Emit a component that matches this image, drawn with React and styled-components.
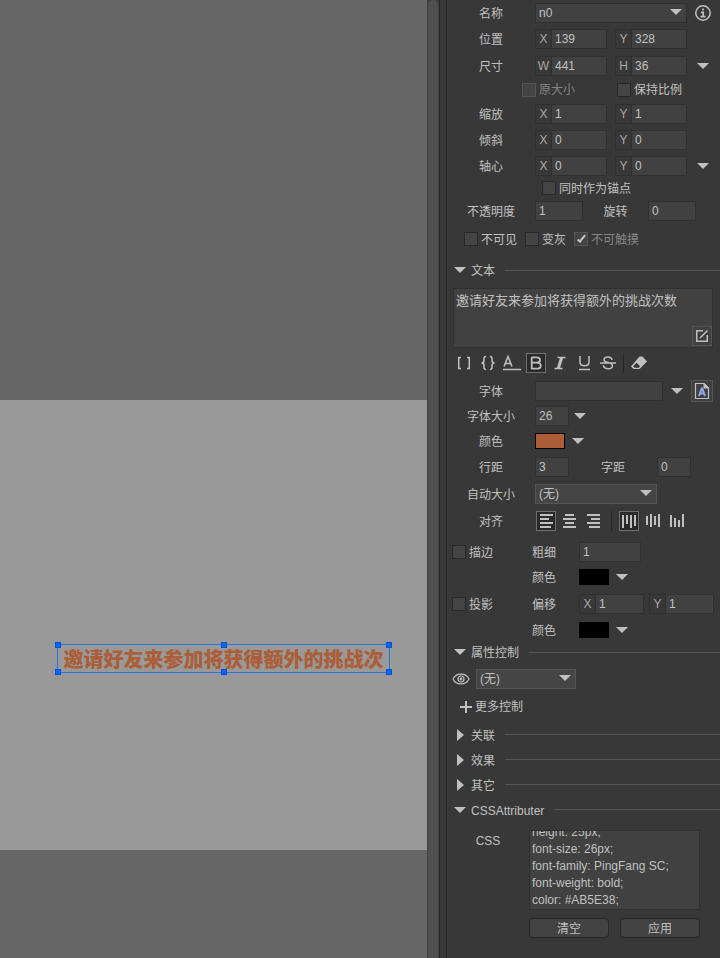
import React, { useLayoutEffect, useRef } from "react";
import styled, { createGlobalStyle, css } from "styled-components";

const Global = createGlobalStyle`
  *, *::before, *::after { box-sizing: border-box; }
  body { margin: 0; background: #383838; }
  body, button, input, select, textarea {
    font: 12px/16px "Liberation Sans", "Noto Sans CJK SC", sans-serif;
    color: #c0c0c0;
  }
  svg { display: block; flex: none; }
`;

/* ---------- shell ---------- */
const Shell = styled.div`
  display: grid;
  grid-template-columns: minmax(0, 1fr) 12px 8px 273px;
  min-height: 100vh;
`;
const Viewport = styled.main`
  display: grid;
  grid-template-rows: 400px 450px 1fr;
  background: #666;
  overflow: hidden;
`;
const Artboard = styled.section`
  grid-row: 2;
  position: relative;
  background: #999;
`;
const Selection = styled.div`
  position: absolute;
  left: 57px;
  top: 244px;
  width: 333px;
  height: 29px;
  border: 1px solid #2b71e0;
  color: #ab5e38;
  font: 900 20px/27px "Noto Sans CJK SC", sans-serif;
  text-align: center;
  white-space: nowrap;
`;
const Handle = styled.i`
  position: absolute;
  width: 6px;
  height: 6px;
  margin: -3px;
  left: ${(p) => p.$x};
  top: ${(p) => p.$y};
  background: #0a66ff;
  border: 1px solid #0050d0;
`;
const Scrollbar = styled.div`
  background: #404040;
  padding: 0 1px;
  display: grid;
`;
const Thumb = styled.div`
  background: #505050;
  border-radius: 6px 6px 0 0;
`;
const Splitter = styled.div`
  background: #383838;
  border: solid #262626;
  border-width: 0 1px;
`;
const Panel = styled.aside`
  background: #383838;
  overflow: hidden;
`;

/* ---------- rows ---------- */
const Row = styled.div`
  display: grid;
  grid-template-columns: 88px minmax(0, 1fr);
  align-items: center;
  height: ${(p) => p.$h}px;
`;
const Label = styled.label`
  text-align: center;
  white-space: nowrap;
  padding-top: 2px;
`;
const Line = styled.div`
  display: flex;
  align-items: center;
  height: ${(p) => p.$h || 20}px;
  gap: ${(p) => p.$gap || 0}px;
  padding-left: ${(p) => p.$left || 0}px;
`;
const PairGrid = styled.div`
  display: grid;
  grid-template-columns: minmax(0, 1fr) minmax(0, 1fr) 25px;
  column-gap: 8px;
  align-items: center;
`;
const SplitGrid = styled.div`
  display: grid;
  grid-template-columns: ${(p) => p.$w}px ${(p) => p.$mid}px ${(p) => p.$w}px;
  align-items: center;
`;
const EffectGrid = styled.div`
  display: grid;
  grid-template-columns: 80px 47px minmax(0, 1fr);
  grid-template-rows: 100%;
  align-items: center;
  padding-left: 5px;
  height: ${(p) => p.$h}px;
`;
const EffectLabel = styled.label`
  grid-column: 2;
  padding-top: 2px;
`;
const OffsetGrid = styled.div`
  display: grid;
  grid-template-columns: 1fr 1fr;
  gap: 5px;
  padding-right: 6px;
`;

/* ---------- controls ---------- */
const fieldBox = css`
  height: 20px;
  background: #414141;
  border: 1px solid #303030;
  outline: none;
`;
const Input = styled.input`
  ${fieldBox}
  width: ${(p) => (p.$w ? p.$w + "px" : "100%")};
  min-width: 0;
  padding: 0 3px;
`;
const AxisBox = styled.label`
  ${fieldBox}
  display: grid;
  grid-template-columns: 15px minmax(0, 1fr);
  background: #383838;
  line-height: 18px;
  text-align: center;
  color: #a8a8a8;
`;
const AxisInput = styled.input`
  min-width: 0;
  width: 100%;
  height: 18px;
  border: 0;
  border-left: 1px solid #303030;
  background: #414141;
  padding: 0 3px;
  outline: none;
`;
const Picker = styled.div`
  display: grid;
  width: ${(p) => (p.$w ? p.$w + "px" : "100%")};
  align-items: center;
  & > * { grid-area: 1 / 1; }
  & > svg { justify-self: end; margin: 0 5px 2px 0; pointer-events: none; }
`;
const Select = styled.select`
  ${fieldBox}
  appearance: none;
  width: 100%;
  padding: 0 3px;
  background: #454545;
  border-color: #555;
`;
const CheckLabel = styled.label`
  display: inline-flex;
  align-items: center;
  gap: 3px;
  width: ${(p) => (p.$w ? p.$w + "px" : "auto")};
  white-space: nowrap;
  color: ${(p) => (p.$dim ? "#858585" : "#c0c0c0")};
`;
const CheckText = styled.span`
  padding-top: 1px;
`;
const CheckBox = styled.input`
  appearance: none;
  width: 14px;
  height: 14px;
  margin: 0;
  display: grid;
  place-items: center;
  background: #444;
  border: 1px solid #282828;
  &:disabled { border-color: #555; }
  &:checked::before {
    content: "";
    width: 9px;
    height: 4px;
    border: solid #c8c8c8;
    border-width: 0 0 2px 2px;
    rotate: -50deg;
    translate: 0 -1px;
  }
`;
const IconButton = styled.button`
  display: grid;
  place-items: center;
  width: ${(p) => p.$size || 20}px;
  height: ${(p) => p.$size || 20}px;
  padding: 0;
  background: ${(p) => (p.$on ? "#2a2a2a" : p.$framed ? "#404040" : "transparent")};
  border: 1px solid ${(p) => (p.$on ? "#707070" : p.$framed ? "#555" : "transparent")};
`;
const ArrowButton = styled.button`
  display: grid;
  place-items: center;
  width: 16px;
  height: 16px;
  padding: 0;
  border: 0;
  background: none;
`;
const Swatch = styled.button`
  width: 30px;
  height: 16px;
  padding: 0;
  border: 1px solid #000;
  background: ${(p) => p.$color};
`;
const Divider = styled.span`
  width: 1px;
  height: 20px;
  margin: 0 ${(p) => p.$space}px;
  background: #262626;
`;
const TextFrame = styled.div`
  display: grid;
  margin: 1px 7px 0 6px;
  & > * { grid-area: 1 / 1; }
  & > button { place-self: end; margin: 2px 1px; }
`;
const TextArea = styled.textarea`
  ${fieldBox}
  height: 60px;
  width: 100%;
  resize: none;
  padding: 4px 2px;
  font-size: 13px;
`;
const CssArea = styled.textarea`
  ${fieldBox}
  height: 80px;
  width: 100%;
  resize: none;
  overflow: hidden;
  padding: 0 2px;
  line-height: 17px;
`;
const Section = styled.h2`
  display: grid;
  grid-template-columns: 14px auto 1fr;
  align-items: center;
  column-gap: 4px;
  height: ${(p) => p.$h || 25}px;
  margin: 0;
  padding-left: 6px;
  font-size: 12px;
  font-weight: normal;
  & > svg { justify-self: center; }
  &::after {
    content: "";
    height: 1px;
    margin-left: 6px;
    background: #555;
  }
`;
const SectionTitle = styled.span`
  padding-top: 2px;
`;
const CssBlock = styled.div`
  display: grid;
  grid-template-columns: 82px minmax(0, 1fr);
  row-gap: 8px;
  padding: 8px 20px 20px 0;
`;
const CssLabel = styled.label`
  padding-top: 3px;
  text-align: center;
`;
const Buttons = styled.div`
  grid-column: 2;
  display: grid;
  grid-template-columns: 1fr 1fr;
  gap: 11px;
`;
const PushButton = styled.button`
  height: 20px;
  padding: 2px 0 0;
  border: 1px solid #282828;
  border-radius: 4px;
  background: #424242;
`;
const PlainButton = styled.button`
  display: flex;
  align-items: center;
  gap: 3px;
  padding: 0;
  border: 0;
  background: none;
`;

/* ---------- icons ---------- */
const ink = "#c0c0c0";
const Down = () => (
  <svg width="12" height="6"><path d="M0 0H12L6 6Z" fill={ink} /></svg>
);
const Right = () => (
  <svg width="7" height="12"><path d="M0 0L7 6L0 12Z" fill={ink} /></svg>
);
const Glyph = ({ children }) => (
  <svg width="18" height="18" fill="none" stroke={ink} strokeWidth="1.5">{children}</svg>
);
const InfoIcon = () => (
  <svg width="16" height="16" fill="none" stroke={ink}>
    <circle cx="8" cy="8" r="7.2" strokeWidth="1.5" />
    <path d="M8 3.500V5.500M6 7.300H8.200V11.700M5.500 11.700H10.500" strokeWidth="1.700" />
  </svg>
);
const EditIcon = () => (
  <Glyph><path d="M10 3.700H3.700V14.300H14.300V8M7 11L14.500 3.500" strokeWidth="1.500" /></Glyph>
);
const EraserIcon = () => (
  <svg width="18" height="18">
    <path d="M1 12.500L9.500 2.500H12.500L17 7.500L9.500 15H3.500L1 12.500Z" fill={ink} />
    <path d="M3.200 12.300L6.500 8.700L10 12.300L8.700 13.700H4.500Z" fill="#383838" />
  </svg>
);
const FontIcon = () => (
  <svg width="20" height="20" fill="none">
    <path d="M3.500 2.500H12L16.500 7V17.500H3.500Z" stroke={ink} strokeWidth="1.200" />
    <path d="M12 2.500L16.500 7H12Z" stroke={ink} fill={ink} />
    <path d="M7 15L9.700 7.500H10.300L13 15M8 12.500H12" stroke="#8fa9e8" strokeWidth="2" />
  </svg>
);
const EyeIcon = () => (
  <svg width="18" height="12" fill="none" stroke={ink} strokeWidth="1.2">
    <path d="M1 6C4 -0.500 14 -0.500 17 6C14 12.500 4 12.500 1 6Z" />
    <circle cx="9" cy="6" r="3" />
    <circle cx="9" cy="6" r="0.800" />
  </svg>
);
const PlusIcon = () => (
  <svg width="12" height="12"><path d="M6 0V12M0 6H12" stroke={ink} strokeWidth="2" /></svg>
);
const textTools = [
  ["方括号", <Glyph><path d="M6 3.500H3.700V14.500H6M12 3.500H14.300V14.500H12" /></Glyph>],
  ["花括号", <Glyph><path d="M7 2.500C4.500 2.500 5 4.500 5 6.500S4.500 9 2.500 9C4.500 9 5 9.500 5 11.500S4.500 15.500 7 15.500M11 2.500C13.500 2.500 13 4.500 13 6.500S13.500 9 15.500 9C13.500 9 13 9.500 13 11.500S13.500 15.500 11 15.500" /></Glyph>],
  ["文字颜色", <Glyph><path d="M1 12.500L5 2.500L9 12.500M2.500 9.500H7.500M0 15.500H18" strokeWidth="1.500" /></Glyph>],
  ["粗体", <Glyph><path d="M4.700 3.300H9.500C14.200 3.300 14.200 8.700 9.500 8.700H4.700M9.500 8.700C15.200 8.700 15.200 14.700 9.500 14.700H4.700V3.300" strokeWidth="1.800" /></Glyph>, true],
  ["斜体", <Glyph><path d="M6.500 3.500H14.500M3.500 14.500H11.500" /><path d="M10.700 3.500L7.300 14.500" strokeWidth="3" /></Glyph>],
  ["下划线", <Glyph><path d="M5 2V8C5 13 14 13 14 8V2M4 15.500H15" /></Glyph>],
  ["删除线", <Glyph><path d="M13 6C12.500 2 5 2 5 5.700C5 9.500 13.500 7.500 13.500 11.700C13.500 16 4.500 15.500 4.500 11.300M1 9H17" /></Glyph>],
];
const Bars = ({ d }) => (
  <svg width="18" height="18"><path d={d} stroke={ink} strokeWidth="2" /></svg>
);
const hAlign = [
  ["左对齐", "M3 3H16M3 7H12M3 11H16M3 15H14", true],
  ["居中对齐", "M4 3H13M2 7H15M4 11H13M2 15H15"],
  ["右对齐", "M2 3H15M6 7H15M2 11H15M4 15H15"],
];
const vAlign = [
  ["顶部对齐", "M3 3V16M7 3V12M11 3V16M15 3V14", true],
  ["垂直居中", "M3 4V13M7 2V15M11 4V13M15 2V15"],
  ["底部对齐", "M3 3V15M7 6V15M11 8V15M15 2V15"],
];

/* ---------- composed parts ---------- */
const Axis = ({ name, label, value }) => (
  <AxisBox>
    <span>{name}</span>
    <AxisInput aria-label={`${label} ${name}`} defaultValue={value} />
  </AxisBox>
);
const Pair = ({ h, label, names = ["X", "Y"], values, more }) => (
  <Row $h={h}>
    <Label as="span">{label}</Label>
    <PairGrid>
      <Axis name={names[0]} label={label} value={values[0]} />
      <Axis name={names[1]} label={label} value={values[1]} />
      {more && <ArrowButton aria-label={`${label}选项`}><Down /></ArrowButton>}
    </PairGrid>
  </Row>
);
const Check = ({ children, w, ...rest }) => (
  <CheckLabel $w={w} $dim={rest.disabled}>
    <CheckBox type="checkbox" {...rest} />
    <CheckText>{children}</CheckText>
  </CheckLabel>
);
const ColorPick = ({ id, color }) => (
  <Line $gap={5}>
    <Swatch id={id} $color={color} aria-label="颜色" />
    <ArrowButton aria-label="选择颜色"><Down /></ArrowButton>
  </Line>
);
const NoneSelect = ({ id, w, label }) => (
  <Picker $w={w}>
    <Select id={id} aria-label={label}><option>(无)</option></Select>
    <Down />
  </Picker>
);
const Heading = ({ h, open, children }) => (
  <Section $h={h}>
    {open ? <Down /> : <Right />}
    <SectionTitle>{children}</SectionTitle>
  </Section>
);

const cssText =
  "height: 25px;\nfont-size: 26px;\nfont-family: PingFang SC;\nfont-weight: bold;\ncolor: #AB5E38;";

export default function App() {
  const cssRef = useRef(null);
  useLayoutEffect(() => {
    cssRef.current.scrollTop = cssRef.current.scrollHeight;
  }, []);

  return (
    <>
      <Global />
      <Shell>
        <Viewport>
          <Artboard>
            <Selection>
              邀请好友来参加将获得额外的挑战次
              {["0%", "50%", "100%"].map((x) =>
                ["0%", "100%"].map((y) => <Handle key={x + y} $x={x} $y={y} />)
              )}
            </Selection>
          </Artboard>
        </Viewport>
        <Scrollbar><Thumb /></Scrollbar>
        <Splitter />
        <Panel>
          <Row $h={25}>
            <Label htmlFor="name">名称</Label>
            <Line $gap={8}>
              <Picker $w={152}>
                <Input id="name" defaultValue="n0" />
                <Down />
              </Picker>
              <ArrowButton aria-label="信息"><InfoIcon /></ArrowButton>
            </Line>
          </Row>
          <Pair h={28} label="位置" values={["139", "328"]} />
          <Pair h={25} label="尺寸" names={["W", "H"]} values={["441", "36"]} more />
          <Line $h={23} $left={75}>
            <Check w={95} disabled>原大小</Check>
            <Check>保持比例</Check>
          </Line>
          <Pair h={26} label="缩放" values={["1", "1"]} />
          <Pair h={26} label="倾斜" values={["0", "0"]} />
          <Pair h={26} label="轴心" values={["0", "0"]} more />
          <Line $h={18} $left={95}><Check>同时作为锚点</Check></Line>
          <Row $h={28}>
            <Label htmlFor="alpha">不透明度</Label>
            <SplitGrid $w={48} $mid={65}>
              <Input id="alpha" defaultValue="1" />
              <Label htmlFor="rotation">旋转</Label>
              <Input id="rotation" defaultValue="0" />
            </SplitGrid>
          </Row>
          <Line $h={28} $left={17} $gap={8}>
            <Check>不可见</Check>
            <Check>变灰</Check>
            <Check disabled defaultChecked>不可触摸</Check>
          </Line>

          <Heading h={34} open>文本</Heading>
          <TextFrame>
            <TextArea aria-label="文本" defaultValue="邀请好友来参加将获得额外的挑战次数" />
            <IconButton $framed aria-label="编辑文本"><EditIcon /></IconButton>
          </TextFrame>
          <Line $h={30} $left={7} $gap={4}>
            {textTools.map(([name, icon, on]) => (
              <IconButton key={name} $on={on} aria-label={name}>{icon}</IconButton>
            ))}
            <Divider $space={1} />
            <IconButton aria-label="清除格式"><EraserIcon /></IconButton>
          </Line>
          <Row $h={25}>
            <Label htmlFor="font">字体</Label>
            <Line $gap={6}>
              <Input id="font" $w={128} />
              <ArrowButton aria-label="选择字体"><Down /></ArrowButton>
              <IconButton $framed $size={22} aria-label="字体资源"><FontIcon /></IconButton>
            </Line>
          </Row>
          <Row $h={26}>
            <Label htmlFor="size">字体大小</Label>
            <Line $gap={3}>
              <Input id="size" $w={34} defaultValue="26" />
              <ArrowButton aria-label="选择字体大小"><Down /></ArrowButton>
            </Line>
          </Row>
          <Row $h={24}>
            <Label htmlFor="color">颜色</Label>
            <ColorPick id="color" color="#ab5e38" />
          </Row>
          <Row $h={28}>
            <Label htmlFor="leading">行距</Label>
            <SplitGrid $w={34} $mid={88}>
              <Input id="leading" defaultValue="3" />
              <Label htmlFor="spacing">字距</Label>
              <Input id="spacing" defaultValue="0" />
            </SplitGrid>
          </Row>
          <Row $h={26}>
            <Label htmlFor="autosize">自动大小</Label>
            <NoneSelect id="autosize" w={122} />
          </Row>
          <Row $h={28}>
            <Label as="span">对齐</Label>
            <Line $gap={4} $left={1}>
              {hAlign.map(([name, d, on]) => (
                <IconButton key={name} $on={on} aria-label={name}><Bars d={d} /></IconButton>
              ))}
              <Divider $space={3} />
              {vAlign.map(([name, d, on]) => (
                <IconButton key={name} $on={on} aria-label={name}><Bars d={d} /></IconButton>
              ))}
            </Line>
          </Row>
          <EffectGrid $h={34}>
            <Check>描边</Check>
            <EffectLabel htmlFor="stroke">粗细</EffectLabel>
            <Input id="stroke" $w={62} defaultValue="1" />
          </EffectGrid>
          <EffectGrid $h={16}>
            <EffectLabel htmlFor="strokeColor">颜色</EffectLabel>
            <ColorPick id="strokeColor" color="#000" />
          </EffectGrid>
          <EffectGrid $h={38}>
            <Check>投影</Check>
            <EffectLabel as="span">偏移</EffectLabel>
            <OffsetGrid>
              <Axis name="X" label="偏移" value="1" />
              <Axis name="Y" label="偏移" value="1" />
            </OffsetGrid>
          </EffectGrid>
          <EffectGrid $h={14}>
            <EffectLabel htmlFor="shadowColor">颜色</EffectLabel>
            <ColorPick id="shadowColor" color="#000" />
          </EffectGrid>

          <Heading h={30} open>属性控制</Heading>
          <Line $h={24} $left={5} $gap={6}>
            <EyeIcon />
            <NoneSelect w={100} label="显示控制" />
          </Line>
          <Line $h={31} $left={13}>
            <PlainButton><PlusIcon />更多控制</PlainButton>
          </Line>
          <Heading>关联</Heading>
          <Heading>效果</Heading>
          <Heading>其它</Heading>
          <Heading open>CSSAttributer</Heading>
          <CssBlock>
            <CssLabel htmlFor="css">CSS</CssLabel>
            <CssArea id="css" ref={cssRef} defaultValue={cssText} />
            <Buttons>
              <PushButton>清空</PushButton>
              <PushButton>应用</PushButton>
            </Buttons>
          </CssBlock>
        </Panel>
      </Shell>
    </>
  );
}
